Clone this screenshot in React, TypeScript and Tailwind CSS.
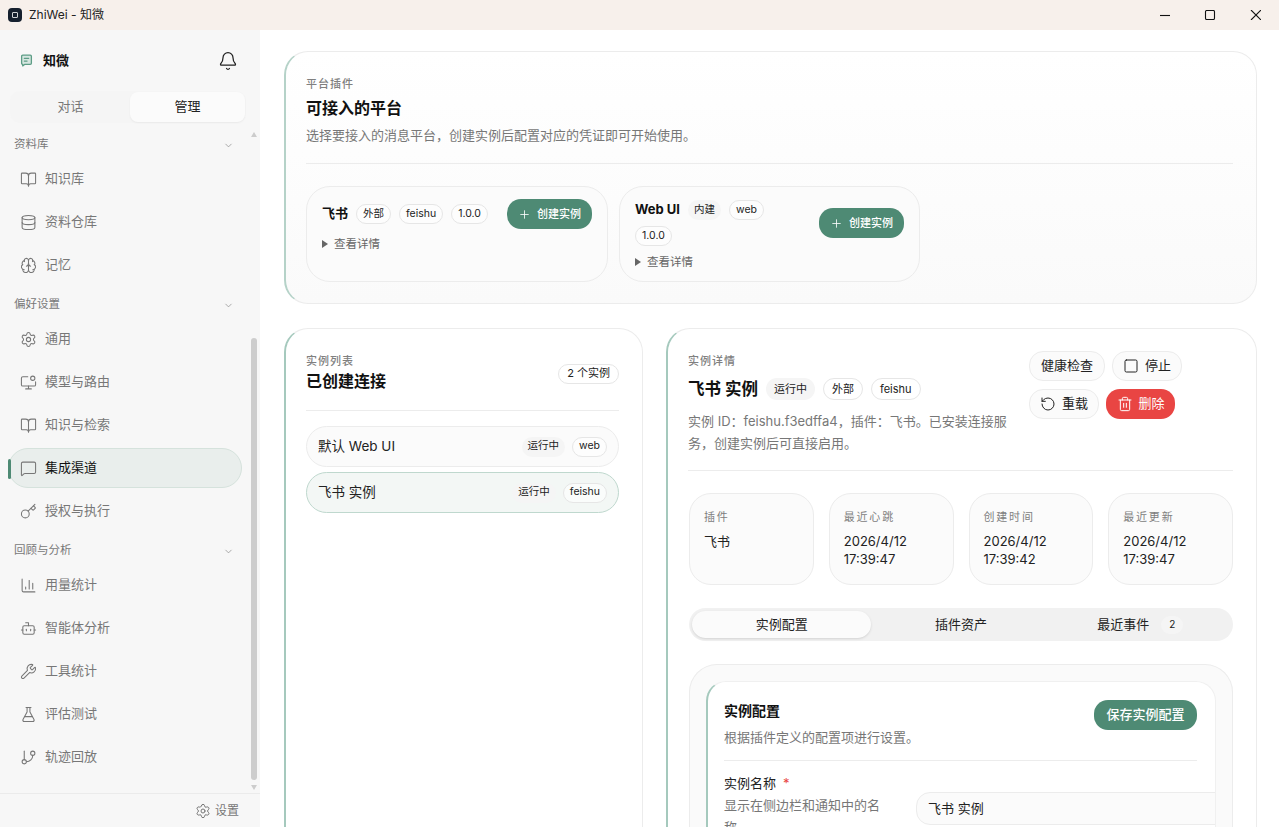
import {
  Bell, BookOpen, Bot, Brain, ChartColumn, ChevronDown, Database, FlaskConical, GitBranch, Key,
  MessageSquare, Plus, RotateCcw, Settings, Square, Trash2, Wrench,
} from "lucide-react"
import type { ReactNode } from "react"

function MonitorDot({ size, strokeWidth, className }: { size: number, strokeWidth: number, className?: string }) {
  return (
    <svg width={size} height={size} viewBox="0 0 24 24" fill="none" stroke="currentColor" strokeWidth={strokeWidth} strokeLinecap="round" strokeLinejoin="round" className={className}>
      <path d="M11 4H4a2 2 0 0 0-2 2v9a2 2 0 0 0 2 2h16a2 2 0 0 0 2-2v-4" />
      <path d="M12 17v4M8 21h8" />
      <circle cx="18" cy="6" r="3" />
    </svg>
  )
}

const navGroups = [
  {
    title: '资料库',
    items: [
      { label: '知识库', icon: BookOpen },
      { label: '资料仓库', icon: Database },
      { label: '记忆', icon: Brain },
    ],
  },
  {
    title: '偏好设置',
    items: [
      { label: '通用', icon: Settings },
      { label: '模型与路由', icon: MonitorDot },
      { label: '知识与检索', icon: BookOpen },
      { label: '集成渠道', icon: MessageSquare, active: true },
      { label: '授权与执行', icon: Key },
    ],
  },
  {
    title: '回顾与分析',
    items: [
      { label: '用量统计', icon: ChartColumn },
      { label: '智能体分析', icon: Bot },
      { label: '工具统计', icon: Wrench },
      { label: '评估测试', icon: FlaskConical },
      { label: '轨迹回放', icon: GitBranch },
    ],
  },
]

const stats = [
  { label: '插件', value: ['飞书'] },
  { label: '最近心跳', value: ['2026/4/12', '17:39:47'] },
  { label: '创建时间', value: ['2026/4/12', '17:39:42'] },
  { label: '最近更新', value: ['2026/4/12', '17:39:47'] },
]

function Pill({ children, filled, big }: { children: ReactNode, filled?: boolean, big?: boolean }) {
  return (
    <span className={`inline-flex items-center rounded-full leading-none text-[#222] whitespace-nowrap ${big ? 'h-[22px] px-[8px] text-[11px]' : 'h-5 px-[6px] text-[10.5px]'} ${filled ? 'bg-[#f5f5f5]' : 'border border-[#e6e6e6] bg-white/60'}`}>
      {children}
    </span>
  )
}

function CreateButton() {
  return (
    <button className="flex h-[30px] w-[85px] shrink-0 items-center justify-center gap-[6px] rounded-[14px] bg-[#4e8a74] text-[11px] font-medium text-white">
      <Plus size={13} strokeWidth={1.5} />
      创建实例
    </button>
  )
}

function Details() {
  return (
    <div className="flex items-center gap-[6px] text-[11.5px] leading-4 text-[#666]">
      <span className="h-0 w-0 border-y-[4px] border-l-[6px] border-y-transparent border-l-[#666]" />
      查看详情
    </div>
  )
}

function Sidebar() {
  return (
    <aside className="relative flex w-[260px] shrink-0 flex-col bg-[#f7f7f7]">
      <div className="flex h-[61px] shrink-0 items-center justify-between pl-[20px] pr-[22px]">
        <div className="flex items-center gap-[10px]">
          <svg width="13" height="13" viewBox="0 0 24 24" fill="#d6e6e0" stroke="#5d9d86" strokeWidth="2.4" strokeLinejoin="round" strokeLinecap="round">
            <path d="M5 2h14a2 2 0 0 1 2 2v13a2 2 0 0 1-2 2H9l-4 3v-3a2 2 0 0 1-2-2V4a2 2 0 0 1 2-2z" />
            <path d="M8 8h8M8 13h5" />
          </svg>
          <span className="text-[13px] font-bold text-[#111]">知微</span>
        </div>
        <Bell size={20} strokeWidth={1.5} className="text-[#222]" />
      </div>
      <div className="mx-[10px] flex h-[32px] w-[236px] shrink-0 rounded-[10px] bg-[#f5f5f5] p-[1px]">
        <div className="flex w-[119px] items-center justify-center text-[13px] text-[#777]">对话</div>
        <div className="flex flex-1 items-center justify-center rounded-[8px] bg-[#fbfbfb] text-[13px] text-[#222] shadow-xs">管理</div>
      </div>
      <nav className="flex flex-1 flex-col overflow-hidden pt-[12px]">
        {navGroups.map((group) => (
          <div key={group.title} className="mb-[10px]">
            <div className="flex h-[20px] items-center justify-between pl-[14px] pr-[26px] text-[11.5px] text-[#777]">
              {group.title}
              <ChevronDown size={11} strokeWidth={1.5} className="text-[#888]" />
            </div>
            <div className="mt-[4px] flex flex-col gap-[3px] pr-[18px] pl-[8px]">
              {group.items.map(({ label, icon: Icon, active }) => (
                <div key={label} className={`relative flex h-[40px] items-center gap-[8px] rounded-[20px] border pl-[11px] text-[13px] ${active ? 'border-[#d5e2dc] bg-[#e9eeec] text-[#111]' : 'border-transparent text-[#777]'}`}>
                  {active && <span className="absolute -left-px top-[10px] h-[20px] w-[3px] rounded-full bg-[#4e8a74]" />}
                  <Icon size={17} strokeWidth={1.5} className="shrink-0 text-[#777]" />
                  {label}
                </div>
              ))}
            </div>
          </div>
        ))}
      </nav>
      <div className="flex h-[34px] shrink-0 items-center justify-end gap-[4px] border-t border-[#ebebeb] pr-[21px] text-[12px] text-[#777]">
        <Settings size={16} strokeWidth={1.5} />
        设置
      </div>
      {/* scrollbar */}
      <span className="absolute left-[251px] top-[102px] h-0 w-0 border-x-[3px] border-b-[5px] border-x-transparent border-b-[#ccc]" />
      <span className="absolute left-[251px] top-[308px] h-[442px] w-[6px] rounded-full bg-[#cdcdcd]" />
      <span className="absolute left-[251px] top-[755px] h-0 w-0 border-x-[3px] border-t-[5px] border-x-transparent border-t-[#ccc]" />
    </aside>
  )
}

function PlatformCard({ name, pills, wide }: { name: string, pills: { text: string, filled?: boolean }[], wide?: boolean }) {
  return (
    <div className={`flex flex-col rounded-[24px] border border-[#ececec] bg-[#fbfbfb] px-[15px] pb-[11px] pt-[12px] ${wide ? 'w-[301px]' : 'w-[302px]'}`}>
      <div className="flex items-center justify-between">
        <div className={`flex flex-wrap items-center gap-x-[8px] gap-y-[6px] ${wide ? 'w-[150px] py-px' : ''}`}>
          <span className="text-[13px] font-bold text-[#111]">{name}</span>
          {pills.map((p) => <Pill key={p.text} filled={p.filled}>{p.text}</Pill>)}
        </div>
        <CreateButton />
      </div>
      <div className="mt-[7px]"><Details /></div>
    </div>
  )
}

function Platforms() {
  return (
    <section className="rounded-[24px] border border-l-2 border-[#ececec] border-l-[#b5d2c8] bg-gradient-to-b from-white to-[#fafafa] pb-[21px] pl-[20px] pr-[23px] pt-[24px]">
      <div className="text-[11px] font-medium tracking-[1px] leading-4 text-[#808080]">平台插件</div>
      <h2 className="mt-[4px] text-[16px] font-bold leading-6 text-[#111]">可接入的平台</h2>
      <p className="mt-[5px] text-[13px] leading-5 text-[#777]">选择要接入的消息平台，创建实例后配置对应的凭证即可开始使用。</p>
      <div className="mt-[18px] border-t border-[#ececec]" />
      <div className="mt-[22px] flex gap-[11px]">
        <PlatformCard name="飞书" pills={[{ text: '外部' }, { text: 'feishu' }, { text: '1.0.0' }]} />
        <PlatformCard wide name="Web UI" pills={[{ text: '内建', filled: true }, { text: 'web' }, { text: '1.0.0' }]} />
      </div>
    </section>
  )
}

function InstanceRow({ name, tag, selected }: { name: string, tag: string, selected?: boolean }) {
  return (
    <div className={`flex h-[41px] items-center justify-between rounded-full border pl-[11px] pr-[11px] text-[13.5px] text-[#222] ${selected ? 'border-[#bfd8ce] bg-[#f3f7f5]' : 'border-[#ececec] bg-[#fbfbfb]'}`}>
      {name}
      <div className="flex items-center gap-[7px]">
        <Pill filled>运行中</Pill>
        <Pill>{tag}</Pill>
      </div>
    </div>
  )
}

function InstanceList() {
  return (
    <section className="min-h-[560px] w-[359px] shrink-0 rounded-t-[24px] border border-b-0 border-l-2 border-[#ececec] border-l-[#a5c9bd] bg-white pl-[20px] pr-[23px] pt-[25px]">
      <div className="flex items-center justify-between">
        <div>
          <div className="text-[11px] font-medium tracking-[1px] leading-[14px] text-[#808080]">实例列表</div>
          <h2 className="mt-px text-[16px] font-bold leading-6 text-[#111]">已创建连接</h2>
        </div>
        <span className="inline-flex h-5 items-center rounded-full border border-[#e6e6e6] px-2 text-[11px] text-[#222]">2 个实例</span>
      </div>
      <div className="mt-[17px] border-t border-[#ececec]" />
      <div className="mt-[15px] flex flex-col gap-[5px]">
        <InstanceRow name="默认 Web UI" tag="web" />
        <InstanceRow name="飞书 实例" tag="feishu" selected />
      </div>
    </section>
  )
}

function ActionButton({ children }: { children: ReactNode }) {
  return (
    <button className="flex h-[30px] items-center justify-center gap-[6px] rounded-[14px] border border-[#ececec] bg-[#fbfbfb] px-[10px] text-[13px] text-[#222]">
      {children}
    </button>
  )
}

function InstanceDetail() {
  return (
    <section className="w-[591px] shrink-0 rounded-t-[24px] border border-b-0 border-l-2 border-[#ececec] border-l-[#a5c9bd] bg-white pl-[20px] pr-[23px] pt-[24px]">
      <div className="flex justify-between">
        <div className="w-[325px]">
          <div className="text-[11px] font-medium tracking-[1px] leading-4 text-[#808080]">实例详情</div>
          <div className="mt-[8px] flex items-center gap-[8px]">
            <h2 className="text-[16.5px] font-bold leading-6 text-[#111]">飞书 实例</h2>
            <Pill filled big>运行中</Pill>
            <Pill big>外部</Pill>
            <Pill big>feishu</Pill>
          </div>
          <p className="mt-[9px] text-[13px] leading-[22px] text-[#777]">实例 ID：feishu.f3edffa4，插件：飞书。已安装连接服务，创建实例后可直接启用。</p>
        </div>
        <div className="-mt-[2px] flex w-[204px] flex-wrap content-start gap-x-[7px] gap-y-[8px]">
          <ActionButton><span className="px-px">健康检查</span></ActionButton>
          <ActionButton><Square size={16} strokeWidth={1.5} />停止</ActionButton>
          <ActionButton><RotateCcw size={16} strokeWidth={1.5} />重载</ActionButton>
          <button className="flex h-[30px] items-center justify-center gap-[6px] rounded-[14px] bg-[#e94543] px-[10.5px] text-[13px] text-white">
            <Trash2 size={16} strokeWidth={1.5} />删除
          </button>
        </div>
      </div>
      <div className="mt-[16px] border-t border-[#ececec]" />
      <div className="mt-[22px] grid grid-cols-4 gap-[15px] pl-px">
        {stats.map((s) => (
          <div key={s.label} className="h-[92px] rounded-[22px] border border-[#ececec] bg-[#fbfbfb] px-[14px] pt-[15px]">
            <div className="text-[11px] leading-4 tracking-[1.8px] text-[#808080]">{s.label}</div>
            <div className="mt-[7px] text-[13px] leading-[18px] text-[#222]">
              {s.value.map((v) => <div key={v}>{v}</div>)}
            </div>
          </div>
        ))}
      </div>
      <div className="ml-px mt-[23px] grid h-[33px] grid-cols-3 rounded-full bg-[#f1f1f1] p-[3px] text-[13px] text-[#222]">
        <div className="flex items-center justify-center rounded-full bg-[#fbfbfb] shadow-sm">实例配置</div>
        <div className="flex items-center justify-center">插件资产</div>
        <div className="flex items-center justify-center gap-[12px]">
          最近事件
          <span className="flex h-[18px] w-[22px] items-center justify-center rounded-full bg-[#f5f5f5] text-[10px]">2</span>
        </div>
      </div>
      <div className="ml-px mt-[23px] rounded-t-[28px] border border-b-0 border-[#ececec] bg-[#fafafa] px-[16px] pt-[16px]">
        <div className="h-[200px] overflow-hidden rounded-t-[20px] border border-b-0 border-l-2 border-[#f0f0f0] border-l-[#a5c9bd] bg-white pl-[16px] pr-[18px] pt-[18px]">
          <div className="flex justify-between">
            <div className="pt-px">
              <h3 className="text-[14px] font-bold leading-5 text-[#111]">实例配置</h3>
              <p className="mt-[6px] text-[13px] leading-5 text-[#777]">根据插件定义的配置项进行设置。</p>
            </div>
            <button className="h-[30px] w-[103px] rounded-[14px] bg-[#4e8a74] text-[13px] font-medium text-white">保存实例配置</button>
          </div>
          <div className="mt-[13px] border-t border-[#ececec]" />
          <div className="mt-[12px] flex gap-[32px]">
            <div className="w-[160px] shrink-0">
              <div className="text-[13px] leading-[20px] text-[#222]">实例名称<span className="ml-[7px] text-[#e94543]">*</span></div>
              <p className="mt-px text-[13px] leading-[22px] text-[#777]">显示在侧边栏和通知中的名称</p>
            </div>
            <div className="mt-[19px] flex h-[33px] w-[340px] shrink-0 items-center rounded-[14px] border border-[#ececec] bg-[#fbfbfb] px-[11px] text-[13px] text-[#222]">飞书 实例</div>
          </div>
        </div>
      </div>
    </section>
  )
}

export default function App() {
  return (
    <div className="flex h-screen flex-col overflow-hidden bg-white font-['Inter','Noto_Sans_CJK_SC',sans-serif]">
      <header className="flex h-[30px] shrink-0 items-center justify-between bg-[#f7f0eb] pl-[8px] pr-[18px]">
        <div className="flex items-center gap-[7px] text-[12px] text-[#222]">
          <span className="flex h-[14px] w-[14px] items-center justify-center rounded-[4px] bg-[#16202e]">
            <span className="h-[6px] w-[6px] rounded-[1px] border border-white/80" />
          </span>
          ZhiWei - 知微
        </div>
        <svg width="101" height="10" viewBox="0 0 101 10" fill="none" stroke="#111" strokeWidth="1.1">
          <path d="M0 5.5h10" />
          <rect x="45.5" y="0.5" width="9" height="9" rx="1.2" />
          <path d="M91 0l10 10M101 0L91 10" />
        </svg>
      </header>
      <div className="flex min-h-0 flex-1">
        <Sidebar />
        <main className="flex min-w-0 flex-1 flex-col gap-[24px] overflow-hidden pb-0 pl-[24px] pr-[22px] pt-[21px]">
          <Platforms />
          <div className="flex flex-1 gap-[23px]">
            <InstanceList />
            <InstanceDetail />
          </div>
        </main>
      </div>
    </div>
  )
}
